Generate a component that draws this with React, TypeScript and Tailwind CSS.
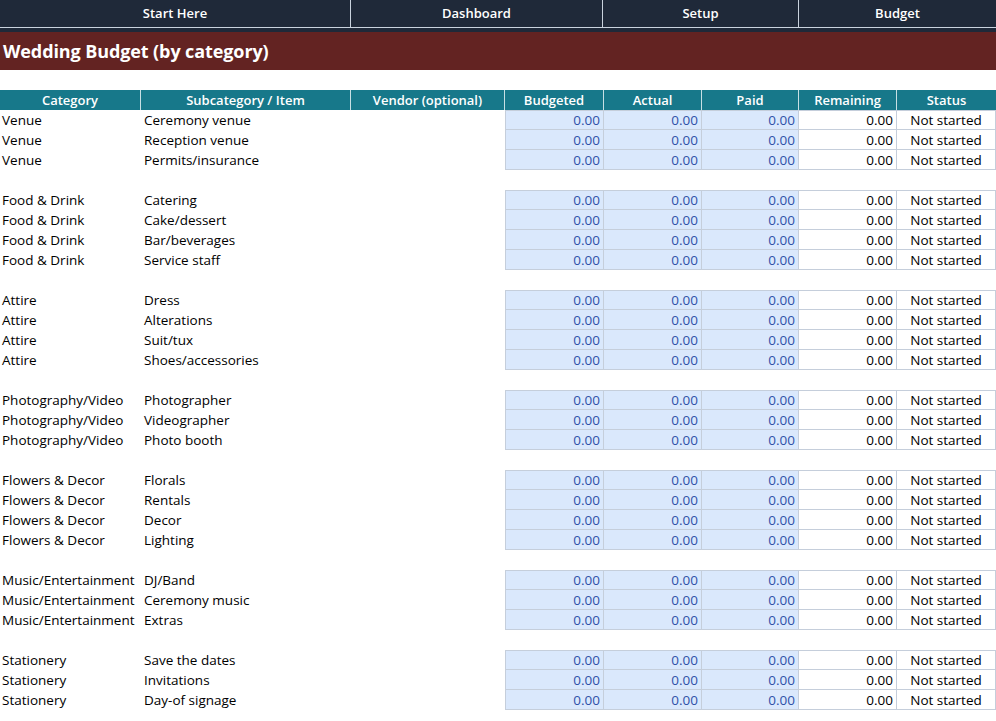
import { Fragment } from 'react'

const NAV = [
  { label: 'Start Here', w: 'w-[351px]' },
  { label: 'Dashboard', w: 'w-[252px]' },
  { label: 'Setup', w: 'w-[196px]' },
  { label: 'Budget', w: 'flex-1' },
]

const HEADERS = [
  'Category',
  'Subcategory / Item',
  'Vendor (optional)',
  'Budgeted',
  'Actual',
  'Paid',
  'Remaining',
  'Status',
]

const GROUPS: { category: string; items: string[] }[] = [
  { category: 'Venue', items: ['Ceremony venue', 'Reception venue', 'Permits/insurance'] },
  { category: 'Food & Drink', items: ['Catering', 'Cake/dessert', 'Bar/beverages', 'Service staff'] },
  { category: 'Attire', items: ['Dress', 'Alterations', 'Suit/tux', 'Shoes/accessories'] },
  { category: 'Photography/Video', items: ['Photographer', 'Videographer', 'Photo booth'] },
  { category: 'Flowers & Decor', items: ['Florals', 'Rentals', 'Decor', 'Lighting'] },
  { category: 'Music/Entertainment', items: ['DJ/Band', 'Ceremony music', 'Extras'] },
  { category: 'Stationery', items: ['Save the dates', 'Invitations', 'Day-of signage'] },
]

const COLS = 'grid grid-cols-[141px_210px_154px_99px_98px_97px_98px_99px]'

export default function App() {
  return (
    <div className="w-[996px] min-h-screen bg-white font-['Open_Sans','Liberation_Sans',sans-serif] text-[13.5px] leading-none text-black overflow-hidden">
      {/* top nav */}
      <div className="bg-[#1f2939] pb-[4px]">
        <div className="flex h-[28px] border-b border-[#c9d2de] text-[13px]">
          {NAV.map((n, i) => (
            <div
              key={n.label}
              className={[
                n.w,
                'flex items-center justify-center text-white font-semibold',
                i < NAV.length - 1 ? 'border-r border-[#c9d2de]' : '',
              ].join(' ')}
            >
              {n.label}
            </div>
          ))}
        </div>
      </div>

      {/* title */}
      <div className="h-[38px] bg-[#632322] flex items-center px-[3px]">
        <h1 className="text-white font-bold text-[18px] tracking-[-0.1px]">Wedding Budget (by category)</h1>
      </div>

      <div className="h-[20px]" />

      {/* header row */}
      <div className={`${COLS} h-[20px] bg-[#17788a] text-white font-semibold text-[13px]`}>
        {HEADERS.map((h, i) => (
          <div
            key={h}
            className={[
              'flex items-center justify-center pt-px',
              i < HEADERS.length - 1 ? 'border-r border-[#c7dfe4]' : '',
            ].join(' ')}
          >
            {h}
          </div>
        ))}
      </div>

      {/* rows */}
      {GROUPS.map((g) => (
        <Fragment key={g.category}>
          {g.items.map((item, idx) => {
            const top = idx === 0 ? 'border-t' : ''
            const num = `flex items-center justify-end pr-[3px] pt-[2px] bg-[#dae8fc] text-[#2f52a8] border-b border-r border-[#c5cedb] ${top}`
            return (
              <div key={item} className={`${COLS} h-[20px]`}>
                <div className="flex items-center pl-[2px] pt-[2px] whitespace-nowrap">{g.category}</div>
                <div className="flex items-center pl-[3px] pt-[2px] whitespace-nowrap">{item}</div>
                <div />
                <div className={`${num} border-l`}>0.00</div>
                <div className={num}>0.00</div>
                <div className={num}>0.00</div>
                <div className={`flex items-center justify-end pr-[3px] pt-[2px] border-b border-r border-[#c5cedb] ${top}`}>0.00</div>
                <div className={`flex items-center justify-center pt-[2px] border-b border-r border-[#c5cedb] ${top}`}>Not started</div>
              </div>
            )
          })}
          <div className="h-[20px]" />
        </Fragment>
      ))}
    </div>
  )
}
